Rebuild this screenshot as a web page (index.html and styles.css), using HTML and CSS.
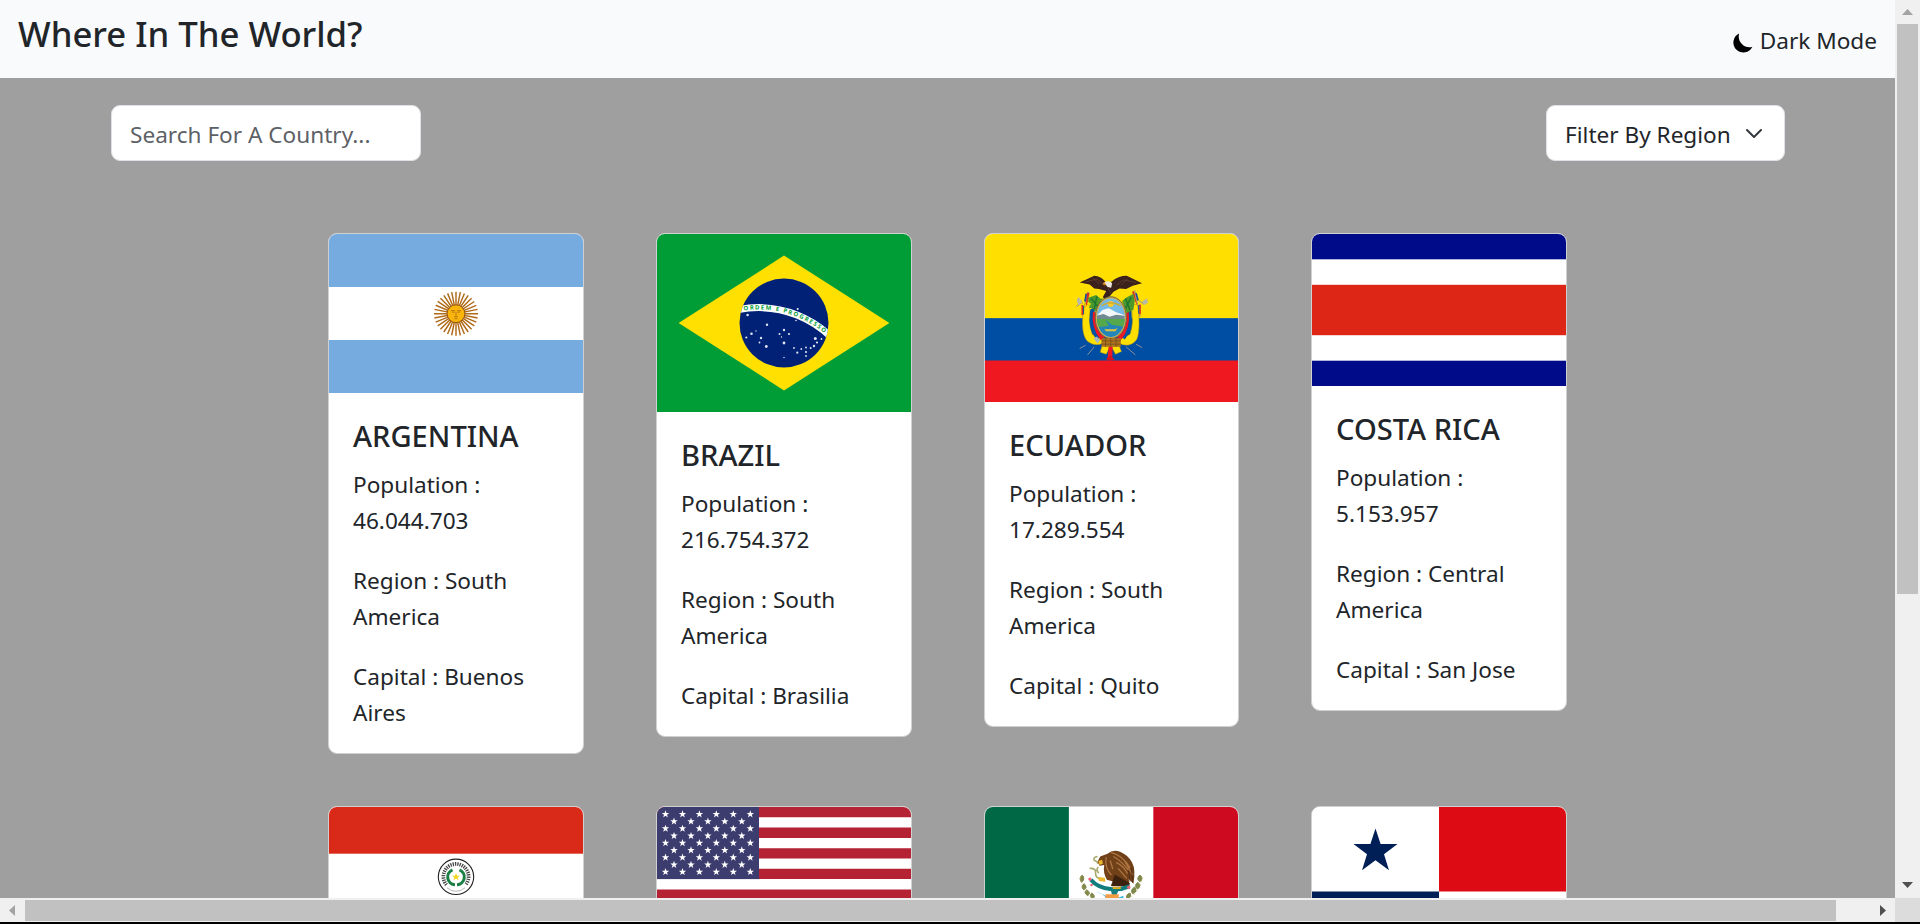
FILE: index.html
```html
<!DOCTYPE html>
<html lang="en">
<head>
<meta charset="utf-8">
<title>Where In The World?</title>
<link rel="stylesheet" href="styles.css">
</head>
<body>
<div class="window">
<div class="viewport">
  <header class="header">
    <h1 class="brand">Where In The World?</h1>
    <div class="mode">
      <svg class="moon" viewBox="0 0 20 20"><path d="M6.2 .4A10 10 0 1 0 19.4 13.8C12 16.400 3.600 9 6.200 .400Z"/></svg>
      <span>Dark Mode</span>
    </div>
  </header>
  <div class="filters">
    <input class="search" type="text" placeholder="Search For A Country...">
    <button class="region"><span>Filter By Region</span>
      <svg class="chevron" viewBox="0 0 16 9"><path d="M1 1l7 7 7-7"/></svg>
    </button>
  </div>
  <main class="cards">
    <article class="card">
      <svg class="flag" viewBox="0 0 254 159">
        <defs><g id="rays"><path d="M0-22V22M-4.300-21.600L4.300 21.600M-8.400-20.300L8.400 20.300M-12.200-18.300L12.200 18.300"/></g></defs>
        <rect width="254" height="159" fill="#76abe0"/><rect y="53" width="254" height="53" fill="#fff"/>
        <g transform="translate(127 79.700)">
          <g stroke="#b06a18" stroke-width="1.450"><use href="#rays"/><use href="#rays" transform="rotate(45)"/><use href="#rays" transform="rotate(90)"/><use href="#rays" transform="rotate(135)"/></g>
          <circle r="8.900" fill="#f9b50b" stroke="#955515"/>
          <path d="M-5-3h4M1-3h4M-4-1.500h2.500M1.500-1.500H4M0-2V2M-2 3h4M-1.500 5h3" stroke="#a96810" stroke-width=".8"/>
        </g>
      </svg>
      <div class="body"><h2 class="name">ARGENTINA</h2><p>Population :<br>46.044.703</p><p>Region : South<br>America</p><p>Capital : Buenos<br>Aires</p></div>
    </article>
    <article class="card">
      <svg class="flag" viewBox="0 0 254 178">
        <defs><clipPath id="disc"><circle cx="127" cy="89" r="44.500"/></clipPath>
        <path id="motto" d="M-1 178A102.600 102.600 0 0 1 204.200 178"/></defs>
        <rect width="254" height="178" fill="#009d37"/>
        <path d="M21.600 89L127 21.600 232.400 89 127 156.400Z" fill="#ffe000"/>
        <circle cx="127" cy="89" r="44.500" fill="#002176"/>
        <circle cx="101.600" cy="178" r="104.400" fill="none" stroke="#fff" stroke-width="7" clip-path="url(#disc)"/>
        <text class="motto"><textPath href="#motto" startOffset="146" textLength="86">ORDEM E PROGRESSO</textPath></text>
        <g fill="#dfe4f2"><circle cx="90.600" cy="81" r="1.300"/><circle cx="140.700" cy="75" r="1.100"/><circle cx="139" cy="86.500" r=".8"/><circle cx="110" cy="90.700" r="1.200"/><circle cx="94.500" cy="99.700" r="1.300"/><circle cx="99" cy="97" r=".7"/><circle cx="89.300" cy="103.500" r="1.100"/><circle cx="104" cy="104" r="1.200"/><circle cx="102.500" cy="108.500" r=".9"/><circle cx="109.300" cy="112.500" r="1.400"/><circle cx="127" cy="96" r="1.200"/><circle cx="122.500" cy="100" r="1"/><circle cx="132" cy="100" r="1.100"/><circle cx="124.500" cy="103" r=".7"/><circle cx="127" cy="109" r="1.400"/><circle cx="127" cy="123.500" r=".7"/><circle cx="137" cy="114" r=".9"/><circle cx="140.300" cy="118.700" r="1.100"/><circle cx="144.300" cy="115" r=".9"/><circle cx="149" cy="113.500" r=".9"/><circle cx="149" cy="118" r="1.100"/><circle cx="149" cy="122" r=".9"/><circle cx="153.700" cy="114" r="1"/><circle cx="157" cy="112" r="1.200"/><circle cx="158.300" cy="104.500" r="1.500"/><circle cx="160" cy="108.500" r="1.100"/><circle cx="164.500" cy="105" r=".9"/></g>
      </svg>
      <div class="body"><h2 class="name">BRAZIL</h2><p>Population :<br>216.754.372</p><p>Region : South<br>America</p><p>Capital : Brasilia</p></div>
    </article>
    <article class="card">
      <svg class="flag" viewBox="0 0 254 169">
        <rect width="254" height="169" fill="#ffdf00"/><rect y="84.500" width="254" height="84.500" fill="#004ea3"/><rect y="127" width="254" height="42" fill="#ef1720"/>
        <g transform="translate(75 26) scale(.3333)">
          <path d="M52 118l18 14M50 140l14-10M238 122l16 12M252 126l12-8M78 257l-18 10M104 262l-20 24M200 262l28 24M230 254l18 10M86 96l-16 72M226 92l16 80" stroke="#8d8f94" stroke-width="3" fill="none"/>
          <path d="M56 112l12 12-10 14-6-12zM262 116l-14 10 8 10 10-8z" fill="#b6b8ac"/>
          <path d="M76 130C64 180 66 236 88 248Q110 262 130 250L122 278 140 284 154 258 168 284 186 276 176 250Q212 268 232 240C242 220 240 170 234 132L216 140Q224 190 212 224L180 240H126L98 224Q84 190 92 140Z" fill="#ffdf00" stroke="#a78b19" stroke-width="1.500"/>
          <path d="M92 150Q84 210 112 240L124 230Q100 190 106 140ZM216 150Q222 210 196 240L184 230Q208 190 202 140Z" fill="#0052a5"/>
          <path d="M100 156Q94 206 124 242L136 232 112 160ZM208 156Q214 206 184 242L172 232 198 160ZM148 250H160L158 302H144Z" fill="#ed1824"/>
          <path d="M82 98l8 2-6 28-6 16zM224 94l-6 2 10 30 6 14z" fill="#d52d28"/><path d="M80 102l-4 24M230 100l6 22" stroke="#164b98" stroke-width="5"/>
          <path d="M68 136v30M242 134v30" stroke="#df2a25" stroke-width="5"/><path d="M72 138v26M238 136v26" stroke="#0c4e9d" stroke-width="3"/>
          <path d="M86 114l24-8 14 12 6-4-18 42-14-10-10-2 6-12-8-6zM222 102l-22 12-12 10 14 36 20-10 4-26z" fill="#4c982c"/>
          <path d="M94 116l22 26M112 110l-8 38M216 112l-18 34M198 116l14 36" stroke="#19742e" stroke-width="4"/>
          <path d="M60 68L104 48Q124 48 140 68L156 66Q176 48 202 48L248 70 220 78 200 88 180 86 162 96 152 108 136 120 130 112 140 94 118 88 104 86 90 74Z" fill="#3b211b"/>
          <path d="M78 66l34-8 26 22M172 76l20-16 38 8M146 84l8 18M100 54l20 20M204 56l-18 20" stroke="#6a4634" stroke-width="2" fill="none"/>
          <path d="M134 68Q148 60 158 70L155 84 144 82Z" fill="#eee7dd"/><path d="M134 66l-5 7 12 3z" fill="#eb9b23"/>
          <ellipse cx="154" cy="174" rx="47" ry="63" fill="#cfaa50" stroke="#6d6541" stroke-width="3"/>
          <clipPath id="shield"><ellipse cx="154" cy="174" rx="42" ry="58"/></clipPath>
          <g clip-path="url(#shield)"><path d="M110 110h90v130h-90z" fill="#73bbe6"/><path d="M110 170L130 150 148 146 170 158 200 168V184H110Z" fill="#f5f8fb"/><path d="M110 168l22-5 18 8 20-6 30 4v20h-90z" fill="#6f8a90"/><path d="M110 178h90v30h-90z" fill="#55a94b"/><path d="M110 204l38-6-10-18 20 16 42 6v40h-90z" fill="#2486b6"/><path d="M134 209h32l8-4-6 10h-28z" fill="#e3c33d"/><circle cx="154" cy="133" r="9" fill="#f7c92b"/><path d="M126 138Q154 120 184 138" stroke="#d0aa32" stroke-width="4" fill="none"/></g>
          <path d="M126 236h58v26h-58z" fill="#ad7420"/><path d="M126 244h58M126 254h58M138 236v26M154 234v28M170 236v26" stroke="#6b4718" stroke-width="2"/>
          <path d="M102 236l10-5 9 10-7 11z" fill="#a7b6c5"/><path d="M140 298L152 288 166 300 158 302H144Z" fill="#d41320"/>
        </g>
      </svg>
      <div class="body"><h2 class="name">ECUADOR</h2><p>Population :<br>17.289.554</p><p>Region : South<br>America</p><p>Capital : Quito</p></div>
    </article>
    <article class="card">
      <svg class="flag" viewBox="0 0 254 152"><rect width="254" height="152" fill="#000b89"/><rect y="25.300" width="254" height="101.400" fill="#fff"/><rect y="50.800" width="254" height="50.400" fill="#de2616"/></svg>
      <div class="body"><h2 class="name">COSTA RICA</h2><p>Population :<br>5.153.957</p><p>Region : Central<br>America</p><p>Capital : San Jose</p></div>
    </article>
    <article class="card">
      <svg class="flag" viewBox="0 0 254 140">
        <rect width="254" height="140" fill="#fff"/><rect width="254" height="46.700" fill="#d92919"/><rect y="93.300" width="254" height="46.700" fill="#0038a8"/>
        <g transform="translate(127 69.800)" fill="none">
          <circle r="17.700" stroke="#222" stroke-width="1.100"/><path d="M-9 11Q0 18 9 11" stroke="#888" stroke-width=".6"/>
          <path d="M-9.500 8A12.600 12.600 0 1 1 9.500 8" stroke="#444" stroke-width="3.700" stroke-dasharray="1.300 1"/>
          <path d="M-3.500-7A7.800 7.800 0 0 0-1 8M3.500-7A7.800 7.800 0 0 1 1 8" stroke="#1b7f44" stroke-width="3"/>
          <path d="M0-3.800l1 2.700h2.900l-2.300 1.800.9 2.800L0 1.800l-2.500 1.700.9-2.800-2.300-1.800h2.900z" fill="#f6d51d"/>
        </g>
      </svg>
    </article>
    <article class="card">
      <svg class="flag" viewBox="0 0 254 134">
        <defs>
          <path id="star" d="M0-3.900L.95-1.250H3.700L1.500.5 2.300 3.200 0 1.600-2.300 3.200-1.500.5-3.700-1.250H-.95Z"/>
          <g id="row5"><use href="#star" x="17"/><use href="#star" x="34"/><use href="#star" x="50.900"/><use href="#star" x="67.800"/><use href="#star" x="84.800"/></g>
          <g id="row6"><use href="#row5" x="-8.500"/><use href="#star" x="93.300"/></g>
        </defs>
        <rect width="254" height="134" fill="#fff"/>
        <path d="M0 5.150H254M0 25.750H254M0 46.350H254M0 66.950H254M0 87.550H254M0 108.200H254M0 128.800H254" stroke="#b42234" stroke-width="10.300"/>
        <rect width="102" height="72.100" fill="#3d3c6e"/>
        <g fill="#fff"><use href="#row6" y="7.200"/><use href="#row5" y="14.400"/><use href="#row6" y="21.600"/><use href="#row5" y="28.800"/><use href="#row6" y="36"/><use href="#row5" y="43.200"/><use href="#row6" y="50.500"/><use href="#row5" y="57.700"/><use href="#row6" y="64.900"/></g>
      </svg>
    </article>
    <article class="card">
      <svg class="flag" viewBox="0 0 254 145">
        <rect width="254" height="145" fill="#fff"/><rect width="84.200" height="145" fill="#006845"/><rect x="169" width="85" height="145" fill="#ce0a21"/>
        <g transform="translate(-15 -17) scale(.3333)">
          <path d="M384 200q-14 2-10 12 12 4 10 10M360 236q20-2 18 14-2 18 26 20M386 232q-8 10 2 18" stroke="#a9ab6e" stroke-width="5" fill="none"/>
          <path d="M414 192Q430 178 452 186 476 196 488 218 500 240 492 282L478 268 480 290 424 288 434 276 412 270Q400 250 404 226L390 228 384 216 392 200Z" fill="#704019"/>
          <path d="M424 188q34 8 58 46M432 200q24 14 44 40M440 218q24 12 34 34M410 202q-6 32 16 54M446 236l26 30M422 212l8 26M462 208l28 48" stroke="#ad7440" stroke-width="4" fill="none"/>
          <path d="M436 256l44 24-2 10-52-2zM486 236l4 42M478 244l4 32" fill="#3d210f" stroke="#3d210f" stroke-width="2"/>
          <path d="M386 214l12-4 2 12-10 4zM386 262l20 2 2 12-20-2z" fill="#edb92c"/>
          <path d="M364 270q20 24 58 28 30 4 58-8" stroke="#137d7d" stroke-width="12" fill="none"/>
          <path d="M430 290q14 6 24 0v8h-24z" fill="#e0ad19"/><path d="M424 300h24l-8 18h-12z" fill="#147e80"/>
          <circle cx="361" cy="268" r="5" fill="#ef6071"/><circle cx="478" cy="293" r="5" fill="#ef6071"/><circle cx="366" cy="286" r="4" fill="#ef6071"/>
          <path d="M376 306l20 6 12 10v20h54v-24l-16 6-38-6-16-8z" fill="#35b4dc"/><path d="M408 314h40v20h-40z" fill="#f29b45"/>
          <path d="M338 256q-12 10-2 22 12-10 2-22zM344 282q-12 8-2 18 14-4 2-18zM352 300q-12 8 2 18 12-6-2-18zM366 310q-8 12 4 18 10-10-4-18zM512 256q-14 12 0 20 12-10 0-20zM506 278q-14 8-2 20 14-8 2-20zM496 292q-16 10-6 20 16-6 6-20zM482 310q-16 6-8 18 14-6 8-18z" fill="#7f874a" stroke="#7f874a" stroke-width="3"/>
          <path d="M332 262q4 42 44 66M518 262q-4 42-40 66" stroke="#c0aa59" stroke-width="2" stroke-dasharray="5 6" fill="none"/>
        </g>
      </svg>
    </article>
    <article class="card">
      <svg class="flag" viewBox="0 0 254 169">
        <rect width="254" height="169" fill="#fff"/><rect x="127" width="127" height="84.500" fill="#dd0b13"/><rect y="84.500" width="127" height="84.500" fill="#001f56"/>
        <path d="M63.500 21.500L68.600 37.100H85.500L72 47.200 77 63.200 63.500 53.300 50 63.200 55 47.200 41.500 37.100H58.400Z" fill="#001f56"/>
      </svg>
    </article>
  </main>
</div>
<div class="vbar"><svg class="vup" viewBox="0 0 25 24"><path d="M7 15L12.500 9 18 15Z" fill="#a3a3a3"/></svg><div class="vthumb"></div><svg class="vdown" viewBox="0 0 25 24"><path d="M7 8H18L12.500 14Z" fill="#505050"/></svg></div>
<div class="hbar"><svg class="hleft" viewBox="0 0 25 24"><path d="M15 7V18L9 12.500Z" fill="#a3a3a3"/></svg><div class="hthumb"></div><svg class="hright" viewBox="0 0 25 24"><path d="M10 7V18L16 12.500Z" fill="#505050"/></svg></div>
<div class="corner"></div>
</div>
</body>
</html>
```
FILE: styles.css
```css
* { box-sizing: border-box; }
body {
  margin: 0;
  background: #000;
  color: #212529;
  font-family: "Noto Sans", "Open Sans", sans-serif;
  font-size: 22.6px;
  line-height: 36px;
  overflow: hidden;
}
.window {
  display: grid;
  grid-template-columns: 1895px 25px;
  grid-template-rows: 898px 24px;
  height: 922px;
}
.viewport { overflow: hidden; background: #9f9f9f; }
.header {
  display: flex;
  justify-content: space-between;
  height: 78px;
  padding: 12px 18px 0 18px;
  background: #f8fafc;
}
.brand { margin: 0; font-size: 34.7px; font-weight: 500; line-height: 43px; }
.mode { display: flex; gap: 7px; padding-top: 11px; }
.moon { width: 20px; height: 20px; margin-top: 10px; }
.filters {
  display: flex;
  justify-content: space-between;
  padding: 27px 110px 0 111px;
}
.search, .region {
  height: 56px;
  border: 1px solid #dee2e6;
  border-radius: 9px;
  background: #fff;
  font: inherit;
  color: #212529;
}
.search { width: 310px; padding: 3px 18px 0; }
.search::placeholder { color: #5d6166; opacity: 1; }
.region {
  display: flex;
  align-items: center;
  justify-content: space-between;
  width: 239px;
  padding: 3px 22px 0 18px;
}
.chevron { width: 16px; height: 9px; margin-top: -3px; fill: none; stroke: #343a40; stroke-width: 2; stroke-linecap: round; stroke-linejoin: round; }
.cards {
  display: grid;
  grid-template-columns: 256px 256px 255px 256px;
  column-gap: 72px;
  row-gap: 52px;
  align-items: start;
  padding: 72px 0 0 328px;
}
.card {
  overflow: hidden;
  min-height: 300px;
  border: 1px solid #d0d0d0;
  border-radius: 9px;
  background: #fff;
}
.flag { display: block; width: 100%; }
.body { padding: 25px 24px 22px; }
.name { margin: 0 0 13px; font-size: 29.1px; font-weight: 500; line-height: 36px; }
.body p { margin: 0 0 24px; white-space: nowrap; }
.body p:last-child { margin-bottom: 0; }
.motto { fill: #009d37; font-size: 6px; font-weight: 700; }
.vbar { display: flex; flex-direction: column; background: #f0f0f0; }
.vup, .vdown { flex: none; width: 25px; height: 24px; }
.vthumb { width: 21px; height: 570px; margin-left: 2px; background: #c1c1c1; }
.vdown { margin-top: auto; }
.hbar { display: flex; background: #f0f0f0; }
.hleft, .hright { flex: none; width: 25px; height: 24px; }
.hthumb { width: 1811px; height: 21px; margin-top: 2px; background: #c1c1c1; }
.hright { margin-left: auto; }
.corner { background: #dcdcdc; }
```
